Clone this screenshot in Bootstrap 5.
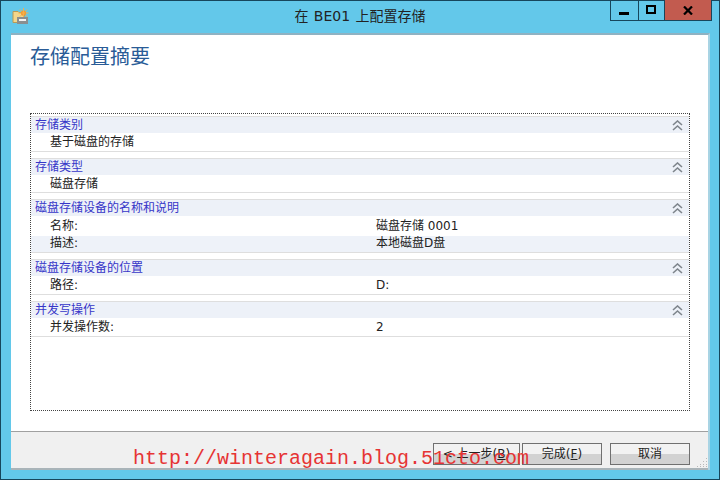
<!DOCTYPE html>
<html lang="zh">
<head>
<meta charset="utf-8">
<title>在 BE01 上配置存储</title>
<link href="https://cdn.jsdelivr.net/npm/bootstrap@5.3.0/dist/css/bootstrap.min.css" rel="stylesheet">
<style>
html,body{margin:0;height:480px;overflow:hidden}
body{font-family:"DejaVu Sans","Noto Sans CJK SC",sans-serif;font-size:12px;line-height:16px;color:#222}
.win-frame{width:720px;height:480px;background:#63c8ea;border:1px solid #17465c;position:relative}
.win-bar{height:32px;display:grid;grid-template-columns:1fr auto 1fr}
.win-icon{margin-left:11px;margin-top:7px}
.win-title{font-size:14px;color:#222;line-height:18px;padding-top:6px;word-spacing:1px;white-space:nowrap}
.win-ctrls{height:21px;margin-top:-1px;margin-right:7px;border:1px solid #17465c;border-top:0;justify-self:end}
.win-ctrl{display:flex;align-items:center;justify-content:center;border-right:1px solid #17465c}
.win-min{width:28px}.win-max{width:26px}
.win-close{width:46px;background:#c25b4f;border-right:0}
.win-client{margin:0 9px 0 10px;height:437px;border-top:2px solid #8fb2c2;background:#fff;border-right:2px solid #a9d4e4}
.client-main{padding:0 0 0 19px;border-bottom:1px solid #a0a0a0;height:397px}
.page-title{font-size:20px;line-height:26px;color:#2a5c97;padding-top:9px;height:78px;margin:0;font-weight:400}
.sum-box{width:660px;height:298px;border:1px dotted #444;padding:2px 0 0}
.sum-sec{border-top:1px solid #dedede;border-bottom:1px solid #dedede;margin-bottom:6px}
.sum-head{height:16px;background:#edf1f8;color:#3636c8;padding-left:4px;line-height:16px}
.sum-head svg{margin-right:6px}
.sum-row{height:18px;padding-left:19px;line-height:19px}
.row-short{height:17px}
.row-tall{height:20px;line-height:21px}
.row-alt{height:16px;line-height:15px;background:#eef2f9}
.sum-key{width:326px}
.client-foot{height:38px;background:#f0f0f0;border-bottom:2px solid #a9b4b9;padding:11px 18px 0 0;position:relative}
.wiz-btn{width:80px;height:22px;padding:0;font-size:12px;line-height:18px;border:1px solid #707070;border-radius:0;color:#222;background:linear-gradient(#f2f2f2 0 50%,#d2d2d2 50% 100%)}
.wiz-back{width:87px;margin-right:2px}
.grip{position:absolute;right:0;bottom:0}
.watermark{position:absolute;left:132px;top:445px;font-family:"Liberation Mono",monospace;font-size:20px;line-height:26px;color:#e63434;white-space:nowrap}
</style>
</head>
<body>
<div class="win-frame">
  <div class="win-bar">
    <svg class="win-icon" width="17" height="17" viewBox="0 0 17 17">
      <path d="M1 3.5h5l1 1h5v10H1z" fill="#f2d68c" stroke="#b99a55"/>
      <circle cx="11.5" cy="5" r="2.6" fill="#f08a1c"/>
      <path d="M11.5 0v10M6.500 5h10M8 1.500l7 7M15 1.500l-7 7" stroke="#f6b04a"/>
      <rect x="5" y="9" width="11" height="7" fill="#8a8f90"/>
      <rect x="7" y="11" width="7" height="2" fill="#f4f4f4"/>
    </svg>
    <div class="win-title">在 BE01 上配置存储</div>
    <div class="win-ctrls d-flex">
      <div class="win-ctrl win-min"><svg width="11" height="12" viewBox="0 0 11 12"><rect y="8" width="10" height="3" fill="#000"/></svg></div>
      <div class="win-ctrl win-max"><svg width="11" height="10" viewBox="0 0 11 10"><rect x="1" y="1" width="8" height="7" fill="none" stroke="#000" stroke-width="2"/></svg></div>
      <div class="win-ctrl win-close"><svg width="10" height="9" viewBox="0 0 10 9"><path d="M1 0.5l8 8M9 0.5l-8 8" stroke="#000" stroke-width="2.2"/></svg></div>
    </div>
  </div>
  <div class="win-client">
    <div class="client-main">
      <h1 class="page-title">存储配置摘要</h1>
      <div class="sum-box">
        <div class="sum-sec">
          <div class="sum-head d-flex justify-content-between align-items-center"><span>存储类别</span><svg width="11" height="11" viewBox="0 0 11 11"><path d="M1 5l4.5-4L10 5M1 10l4.5-4L10 10" fill="none" stroke="#7e858c" stroke-width="1.6"/></svg></div>
          <div class="sum-row">基于磁盘的存储</div>
        </div>
        <div class="sum-sec">
          <div class="sum-head d-flex justify-content-between align-items-center"><span>存储类型</span><svg width="11" height="11" viewBox="0 0 11 11"><path d="M1 5l4.5-4L10 5M1 10l4.5-4L10 10" fill="none" stroke="#7e858c" stroke-width="1.6"/></svg></div>
          <div class="sum-row row-short">磁盘存储</div>
        </div>
        <div class="sum-sec">
          <div class="sum-head d-flex justify-content-between align-items-center"><span>磁盘存储设备的名称和说明</span><svg width="11" height="11" viewBox="0 0 11 11"><path d="M1 5l4.5-4L10 5M1 10l4.5-4L10 10" fill="none" stroke="#7e858c" stroke-width="1.6"/></svg></div>
          <div class="sum-row row-tall d-flex"><div class="sum-key">名称:</div><div>磁盘存储 0001</div></div>
          <div class="sum-row row-alt d-flex"><div class="sum-key">描述:</div><div>本地磁盘D盘</div></div>
        </div>
        <div class="sum-sec">
          <div class="sum-head d-flex justify-content-between align-items-center"><span>磁盘存储设备的位置</span><svg width="11" height="11" viewBox="0 0 11 11"><path d="M1 5l4.5-4L10 5M1 10l4.5-4L10 10" fill="none" stroke="#7e858c" stroke-width="1.6"/></svg></div>
          <div class="sum-row d-flex"><div class="sum-key">路径:</div><div>D:</div></div>
        </div>
        <div class="sum-sec">
          <div class="sum-head d-flex justify-content-between align-items-center"><span>并发写操作</span><svg width="11" height="11" viewBox="0 0 11 11"><path d="M1 5l4.5-4L10 5M1 10l4.5-4L10 10" fill="none" stroke="#7e858c" stroke-width="1.6"/></svg></div>
          <div class="sum-row d-flex"><div class="sum-key">并发操作数:</div><div>2</div></div>
        </div>
      </div>
    </div>
    <div class="client-foot d-flex justify-content-end align-items-start">
      <button type="button" class="btn wiz-btn wiz-back">&lt; 上一步(<u>B</u>)</button>
      <button type="button" class="btn wiz-btn">完成(<u>F</u>)</button>
      <button type="button" class="btn wiz-btn ms-2">取消</button>
      <svg class="grip" width="12" height="12" viewBox="0 0 12 12"><path d="M10 2h1v1h-1zM7 5h1v1H7zM10 5h1v1h-1zM4 8h1v1H4zM7 8h1v1H7zM10 8h1v1h-1zM1 10h1v1H1zM4 10h1v1H4zM7 10h1v1H7zM10 10h1v1h-1z" fill="#b9b9b9"/></svg>
    </div>
  </div>
  <div class="watermark">http://winteragain.blog.51cto.com</div>
</div>
</body>
</html>
